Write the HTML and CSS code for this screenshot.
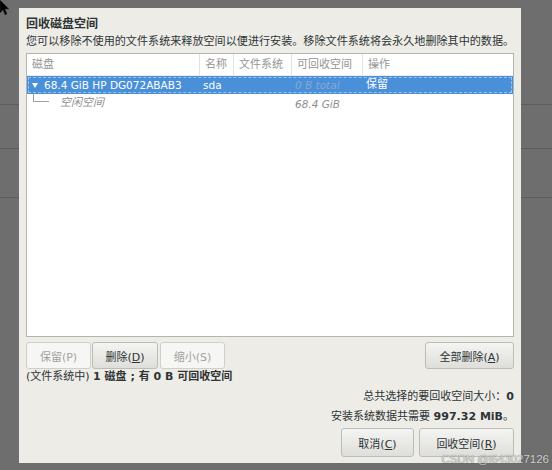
FILE: index.html
```
<!DOCTYPE html>
<html lang="zh-CN">
<head>
<meta charset="utf-8">
<title>回收磁盘空间</title>
<link rel="stylesheet" href="styles.css">
</head>
<body>
<div class="dialog">
  <div class="title">回收磁盘空间</div>
  <div class="subtitle">您可以移除不使用的文件系统来释放空间以便进行安装。移除文件系统将会永久地删除其中的数据。</div>
  <div class="table">
    <div class="row head">
      <div class="cell">磁盘</div>
      <div class="cell sep">名称</div>
      <div class="cell sep">文件系统</div>
      <div class="cell sep">可回收空间</div>
      <div class="cell sep">操作</div>
    </div>
    <div class="row selected">
      <div class="cell disk"><span class="tri"></span><span class="lat">68.4 GiB HP DG072ABAB3</span></div>
      <div class="cell lat">sda</div>
      <div class="cell"></div>
      <div class="cell lat dimsel">0 B total</div>
      <div class="cell">保留</div>
    </div>
    <div class="row child">
      <div class="cell free"><span class="branch"></span><span class="dim">空闲空间</span></div>
      <div class="cell"></div>
      <div class="cell"></div>
      <div class="cell lat dim">68.4 GiB</div>
      <div class="cell"></div>
    </div>
  </div>
  <div class="actions">
    <div class="group">
      <button class="btn disabled w65">保留(P)</button>
      <button class="btn w66">删除(<u>D</u>)</button>
      <button class="btn disabled w65 ml">缩小(S)</button>
    </div>
    <button class="btn w89">全部删除(<u>A</u>)</button>
  </div>
  <div class="status">(文件系统中) <b>1 磁盘 ; 有 0 B 可回收空间</b></div>
  <div class="summary first">总共选择的要回收空间大小：<b>0</b></div>
  <div class="summary">安装系统数据共需要 <b>997.32 MiB</b>。</div>
  <div class="footer">
    <button class="btn w72">取消(<u>C</u>)</button>
    <button class="btn w95">回收空间(<u>R</u>)</button>
  </div>
</div>
<svg class="cursor" width="10" height="16" viewBox="0 0 10 16"><path d="M0 0 L0 13 L3 10 L5 15 L7 14 L5 9 L9 9 Z" fill="#000" stroke="#333" stroke-width="0.5"/></svg>
<div class="watermark">CSDN @l643027126</div>
</body>
</html>
```
FILE: styles.css
```
html, body {
  margin: 0;
  padding: 0;
}
body {
  width: 552px;
  height: 470px;
  overflow: hidden;
  position: relative;
  font-family: "DejaVu Sans", "Noto Sans CJK SC", sans-serif;
  font-size: 11px;
  color: #2e3436;
  background:
    linear-gradient(#5c5c5c, #5c5c5c) 0 104px / 100% 1px no-repeat,
    linear-gradient(#5c5c5c, #5c5c5c) 0 148px / 100% 1px no-repeat,
    linear-gradient(#5c5c5c, #5c5c5c) 0 197px / 100% 1px no-repeat,
    #6e6e6e;
}
.dialog {
  box-sizing: border-box;
  margin: 8px 0 0 19px;
  width: 502px;
  height: 455px;
  background: #edece6;
  padding: 8px 7px 0 7px;
  display: flex;
  flex-direction: column;
}
.title {
  font-weight: bold;
  font-size: 12px;
  line-height: 16px;
}
.subtitle {
  margin-top: 2px;
  line-height: 16px;
  white-space: nowrap;
  font-size: 11.1px;
}
.table {
  margin-top: 3px;
  box-sizing: border-box;
  height: 284px;
  border: 1px solid #b4b4b0;
  background: #fff;
}
.row {
  display: grid;
  grid-template-columns: 172px 34px 58px 71px 1fr;
  align-items: center;
}
.row.head {
  height: 21px;
  color: #959595;
  border-bottom: 1px solid #ededeb;
}
.row.head .cell {
  height: 21px;
  line-height: 21px;
  padding-left: 5px;
}
.row.head .sep {
  border-left: 1px solid #e2e2e0;
}
.row.selected {
  height: 18px;
  background: #4a90d9;
  color: #fff;
  outline: 1px dashed rgba(255, 255, 255, 0.45);
  outline-offset: -2px;
}
.row.child {
  height: 19px;
}
.cell {
  padding-left: 4px;
  white-space: nowrap;
  line-height: 18px;
}
.lat {
  font-size: 10.5px;
}
.disk {
  display: flex;
  align-items: center;
  padding-left: 5px;
}
.tri {
  width: 0;
  height: 0;
  border-left: 3.5px solid transparent;
  border-right: 3.5px solid transparent;
  border-top: 5px solid #fff;
  margin-right: 6px;
  margin-top: 1px;
}
.dim {
  color: #8e8e8e;
  font-style: italic;
}
.dimsel {
  color: #86a8d2;
  font-style: italic;
}
.free {
  display: flex;
  align-items: flex-start;
  padding-left: 6px;
  height: 19px;
}
.branch {
  width: 15px;
  height: 7px;
  border-left: 1px solid #a0a0a0;
  border-bottom: 1px solid #a0a0a0;
  margin-right: 11px;
}
.actions {
  margin-top: 5px;
  display: flex;
  justify-content: space-between;
}
.group {
  display: flex;
  gap: 1px;
}
.btn {
  box-sizing: border-box;
  height: 27px;
  font-family: "DejaVu Sans", "Noto Sans CJK SC", sans-serif;
  font-size: 11px;
  color: #2e3436;
  border: 1px solid #bdbdb8;
  border-radius: 3px;
  background: linear-gradient(#f4f4f2, #dededa);
  padding: 0;
}
.btn u {
  text-decoration: underline;
}
.btn.disabled {
  background: #f6f6f4;
  color: #a2a2a0;
  border-color: #cfcfcb;
}
.ml { margin-left: 1px; }
.w65 { width: 65px; }
.w66 { width: 66px; }
.w72 { width: 73px; }
.w89 { width: 89px; }
.w95 { width: 95px; }
.status {
  line-height: 16px;
}
.summary {
  text-align: right;
  line-height: 20px;
}
.summary.first {
  margin-top: 2px;
}
.footer {
  margin-top: 1px;
  display: flex;
  justify-content: flex-end;
  gap: 5px;
}
.footer .btn {
  height: 29px;
}
.cursor {
  position: absolute;
  left: 0;
  top: 0;
}
.watermark {
  position: absolute;
  right: 3px;
  bottom: 5px;
  font-family: "Liberation Sans", sans-serif;
  font-size: 11.5px;
  line-height: 12px;
  color: rgba(235, 235, 235, 0.85);
  text-shadow: 0 0 1px rgba(60, 60, 60, 0.9);
}
```
